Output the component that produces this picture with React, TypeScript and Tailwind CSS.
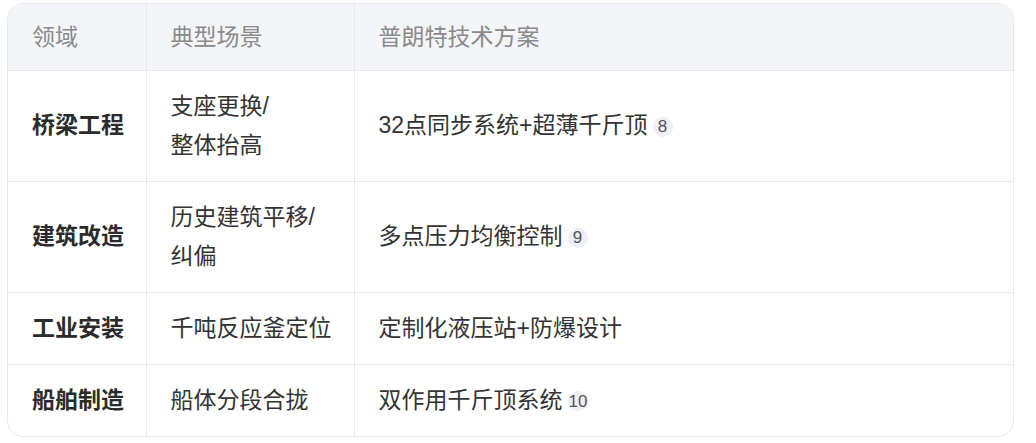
import React from "react";

type Row = {
  field: string;
  scene: string[];
  plan: string;
  cite?: string;
};

const rows: Row[] = [
  { field: "桥梁工程", scene: ["支座更换/", "整体抬高"], plan: "32点同步系统+超薄千斤顶", cite: "8" },
  { field: "建筑改造", scene: ["历史建筑平移/", "纠偏"], plan: "多点压力均衡控制", cite: "9" },
  { field: "工业安装", scene: ["千吨反应釜定位"], plan: "定制化液压站+防爆设计" },
  { field: "船舶制造", scene: ["船体分段合拢"], plan: "双作用千斤顶系统", cite: "10" },
];

const Cite = ({ n }: { n: string }) => (
  <span className="ml-[5px] inline-flex h-[20px] min-w-[20px] items-center justify-center rounded-full bg-[#eeeef6] px-[1px] align-middle text-[17px] leading-none text-[#555]">
    {n}
  </span>
);

const App = () => {
  return (
    <div
      className="min-h-screen w-full bg-white pl-[7px] pt-[3px]"
      style={{ fontFamily: '"Liberation Sans", "Noto Sans CJK SC", sans-serif' }}
    >
      <div className="w-[1007px] overflow-hidden rounded-[16px] border border-[#e8e8ec]">
        <table className="w-full table-fixed border-collapse whitespace-nowrap text-[23px] text-[#333]">
          <colgroup>
            <col className="w-[138px]" />
            <col className="w-[208px]" />
            <col />
          </colgroup>
          <thead>
            <tr className="bg-[#f4f5f9] text-[#8a8a8a]">
              <th className="h-[66px] pl-6 text-left font-normal">领域</th>
              <th className="h-[66px] border-l border-[#e8e8ec] pl-6 text-left font-normal">典型场景</th>
              <th className="h-[66px] border-l border-[#e8e8ec] pl-6 text-left font-normal">普朗特技术方案</th>
            </tr>
          </thead>
          <tbody>
            {rows.map((r) => (
              <tr key={r.field} className="border-t border-[#e8e8ec]">
                <td className="py-4 pl-6 font-bold leading-[39px] text-[#2b2b2b]">{r.field}</td>
                <td className="border-l border-[#e8e8ec] py-4 pl-6 leading-[39px]">
                  {r.scene.map((s) => (
                    <div key={s}>{s}</div>
                  ))}
                </td>
                <td className="border-l border-[#e8e8ec] py-4 pl-6 leading-[39px]">
                  {r.plan}
                  {r.cite && <Cite n={r.cite} />}
                </td>
              </tr>
            ))}
          </tbody>
        </table>
      </div>
    </div>
  );
};

export default App;
